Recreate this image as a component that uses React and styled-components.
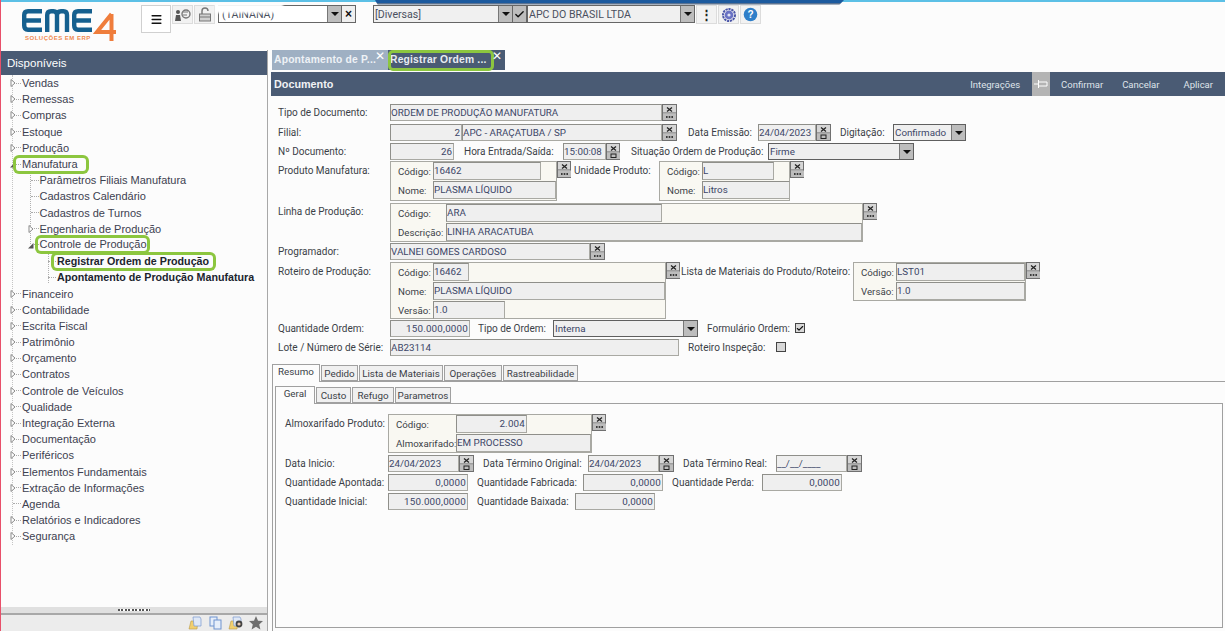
import React from "react";
import styled, { createGlobalStyle, css } from "styled-components";
import { Check, Menu } from "lucide-react";

const GREEN = "#8cc63f";
const SLATE = "#4a5b74";
const FORM_FONT = `Roboto, "Liberation Sans", Arial, sans-serif`;

const GlobalStyle = createGlobalStyle`
  html, body { margin: 0; padding: 0; height: 100%; overflow: hidden; background: #fcfcfc; }
  #root { height: 100%; }
  * { box-sizing: border-box; }
  body { font-family: "Liberation Sans", Arial, sans-serif; font-size: 11px; color: #333; }
`;

const Shell = styled.div`
  width: 1225px;
  height: 631px;
  display: flex;
  flex-direction: column;
  border-left: 1px solid #e8506a;
  overflow: hidden;
`;

const TopStrip = styled.div`
  height: 3px;
  flex: none;
  position: relative;
  z-index: 2;
  background: linear-gradient(180deg, #5cc0e6 0 2px, #fcfcfc 2px);
  &::after {
    content: "";
    position: absolute;
    left: 374px;
    top: 0;
    width: 469px;
    height: 5px;
    background: linear-gradient(180deg, #1c5a9e 0 3px, #5b7392 3px 4px, #a8b2bf 4px);
    clip-path: polygon(0 0, 100% 0, 99% 100%, 0.6% 100%);
  }
`;

const Header = styled.header`
  height: 47px;
  flex: none;
  display: flex;
  align-items: flex-start;
  padding-top: 2px;
  position: relative;
`;

const LogoBox = styled.div`
  width: 140px;
  flex: none;
  position: relative;
`;

const LogoTag = styled.span`
  position: absolute;
  left: 24px;
  top: 30px;
  font-size: 6px;
  font-weight: bold;
  letter-spacing: 0.5px;
  color: #ef8a50;
  white-space: nowrap;
`;

const MenuButton = styled.button`
  width: 30px;
  height: 28px;
  background: #fff;
  border: 1px solid #d0d0d0;
  padding: 0;
  display: flex;
  align-items: center;
  justify-content: center;
  color: #111;
`;

const ToolButton = styled.button`
  width: 21px;
  height: 19px;
  margin-left: ${(p) => p.$ml ?? 0}px;
  background: #f2f2f2;
  border: 1px solid #dcdcdc;
  padding: 0;
  display: flex;
  align-items: center;
  justify-content: center;
  color: #222;
  font-size: 13px;
  font-weight: bold;
`;

const Combo = styled.div`
  width: ${(p) => p.$w}px;
  height: ${(p) => p.$h ?? 18}px;
  margin-left: ${(p) => p.$ml ?? 0}px;
  flex: none;
  border: 1px solid #666;
  background: ${(p) => p.$bg ?? "#f0f0f0"};
  display: flex;
  align-items: center;
  overflow: hidden;
`;

const ComboText = styled.span`
  flex: 1;
  padding-left: ${(p) => p.$pl ?? 1}px;
  font-family: ${FORM_FONT};
  font-size: 10.6px;
  color: ${(p) => p.$c ?? "#4a4f5e"};
  white-space: nowrap;
  overflow: hidden;
`;

const DropButton = styled.span`
  width: 14px;
  height: 100%;
  flex: none;
  background: #bdbdbd;
  border-left: 1px solid #777;
  display: flex;
  align-items: center;
  justify-content: center;
  &::after {
    content: "";
    border-left: 4px solid transparent;
    border-right: 4px solid transparent;
    border-top: 4px solid #111;
  }
`;

const SquareButton = styled.span`
  width: 14px;
  height: 18px;
  flex: none;
  border: 1px solid #666;
  border-left: 0;
  background: ${(p) => p.$bg ?? "#efefef"};
  display: flex;
  align-items: center;
  justify-content: center;
  color: #111;
  font-size: 12px;
  font-weight: bold;
`;

const BlurPatch = styled.div`
  position: absolute;
  left: 214px;
  top: 1px;
  width: 68px;
  height: 9px;
  background: #fff;
  filter: blur(1px);
`;

const Body = styled.div`
  flex: 1;
  display: flex;
  min-height: 0;
`;

const Sidebar = styled.aside`
  width: 267px;
  flex: none;
  display: flex;
  flex-direction: column;
  border-right: 1px solid #a8a8a8;
`;

const SideTitle = styled.div`
  height: 24px;
  flex: none;
  margin-top: 1px;
  background: ${SLATE};
  color: #fff;
  font-size: 11.5px;
  padding: 6px 0 0 6px;
`;

const Tree = styled.ul`
  flex: 1;
  list-style: none;
  margin: 0;
  padding: 0;
  position: relative;
  &::before {
    content: "";
    position: absolute;
    left: 11px;
    top: 0;
    height: 470px;
    border-left: 1px dotted #c4c4c4;
  }
`;

const Guide = styled.i`
  position: absolute;
  left: ${(p) => p.$x}px;
  top: ${(p) => p.$y}px;
  height: ${(p) => p.$h}px;
  border-left: 1px dotted #b0b0b0;
`;

const TreeRow = styled.li`
  height: 16.2px;
  display: flex;
  align-items: center;
  position: relative;
  padding-left: ${(p) => 9 + p.$depth * 17.5}px;
  font-size: ${(p) => (p.$bold ? 10.7 : 11)}px;
  color: ${(p) => (p.$bold ? "#20242e" : "#3c4150")};
  font-weight: ${(p) => (p.$bold ? "bold" : "normal")};
  white-space: nowrap;
`;

const Twist = styled.span`
  width: 6px;
  height: 8px;
  flex: none;
  display: flex;
  align-items: center;
`;

const Dash = styled.span`
  width: ${(p) => p.$w ?? 6}px;
  flex: none;
  margin: 0 1px 0 ${(p) => p.$ml ?? 0}px;
  border-top: 1px dotted #aaa;
`;

const Mark = styled.span`
  ${(p) =>
    p.$on &&
    css`
      position: relative;
      z-index: 1;
      border-radius: 3px;
      padding: 0 ${p.$px ?? 5}px 0 ${p.$pl ?? 3}px;
      margin: 0 -${p.$px ?? 5}px 0 -${p.$pl ?? 3}px;
      box-shadow: 0 0 0 3px ${GREEN};
      line-height: 13px;
    `}
`;

const Splitter = styled.div`
  height: 6px;
  flex: none;
  background: #e0e0e0;
  display: flex;
  justify-content: center;
  align-items: center;
  &::after {
    content: "";
    width: 32px;
    height: 2px;
    background: repeating-linear-gradient(90deg, #555 0 2px, #fff 2px 3.5px);
  }
`;

const SideFoot = styled.div`
  height: 18px;
  flex: none;
  background: #ececec;
  border-top: 2px solid #a8a8a8;
  display: flex;
  justify-content: flex-end;
  align-items: center;
  gap: 6px;
  padding-right: 4px;
`;

const Main = styled.main`
  flex: 1;
  min-width: 0;
  display: flex;
  flex-direction: column;
  padding-left: 3px;
`;

const DocTabs = styled.div`
  height: 22px;
  flex: none;
  display: flex;
  padding-left: 1px;
`;

const DocTab = styled.div`
  width: ${(p) => p.$w}px;
  height: 20px;
  flex: none;
  background: ${(p) => (p.$on ? SLATE : "#9fb0c3")};
  color: ${(p) => (p.$on ? "#e8ecf2" : "#eef2f6")};
  font-size: 10.3px;
  font-weight: bold;
  letter-spacing: 0.2px;
  padding: 4px 0 0 2px;
  position: relative;
  white-space: nowrap;
`;

const DocTabRing = styled.span`
  position: absolute;
  left: 0;
  top: 0;
  width: 106px;
  height: 21px;
  border: 3px solid ${GREEN};
  border-radius: 5px;
`;

const TabClose = styled.span`
  position: absolute;
  right: 3px;
  top: 0;
  width: 10px;
  color: #fff;
  font-size: 12px;
  font-weight: normal;
  letter-spacing: 0;
  line-height: 12px;
  text-align: center;
`;

const DocBar = styled.div`
  height: 24px;
  flex: none;
  background: ${SLATE};
  display: flex;
  align-items: center;
  color: #fff;
  padding-left: 3px;
`;

const DocTitle = styled.strong`
  flex: 1;
  font-size: 10.8px;
  color: #f0f2f5;
`;

const BarAction = styled.span`
  font-family: ${FORM_FONT};
  font-size: 9.5px;
  color: #dfe4ea;
  margin-right: ${(p) => p.$mr}px;
`;

const PinButton = styled.span`
  width: 18px;
  height: 24px;
  background: #b4b4b4;
  display: flex;
  align-items: center;
  justify-content: center;
  margin-right: 11px;
`;

const Form = styled.section`
  flex: none;
  padding: 8px 0 0 7px;
  display: flex;
  flex-direction: column;
`;

const Row = styled.div`
  display: flex;
  align-items: flex-start;
  height: ${(p) => p.$h ?? 17}px;
  margin-top: ${(p) => p.$mt ?? 0}px;
`;

const Label = styled.label`
  width: ${(p) => p.$w}px;
  flex: none;
  font-family: ${FORM_FONT};
  font-size: 10px;
  line-height: 17px;
  color: #3b3f47;
  white-space: nowrap;
  margin-top: ${(p) => p.$mt ?? 0}px;
  margin-left: ${(p) => p.$ml ?? 0}px;
`;

const Input = styled.div`
  width: ${(p) => p.$w}px;
  height: ${(p) => p.$h ?? 17}px;
  flex: none;
  background: #efefef;
  border: 1px solid #a9a9a3;
  border-top-color: #8f8f8a;
  border-left-color: #8f8f8a;
  font-family: ${FORM_FONT};
  font-size: 9.8px;
  line-height: 15px;
  color: #3c4668;
  padding: 0 1px 0 0;
  text-align: ${(p) => (p.$right ? "right" : "left")};
  white-space: nowrap;
  overflow: hidden;
  letter-spacing: ${(p) => (p.$num ? "0.2px" : "0")};
`;

const Select = styled.div`
  width: ${(p) => p.$w}px;
  height: 17px;
  flex: none;
  background: #efefef;
  border: 1px solid #5f5f5f;
  display: flex;
  font-family: ${FORM_FONT};
  font-size: 9.8px;
  line-height: 15px;
  color: #3c4668;
`;

const SelectText = styled.span`
  flex: 1;
  padding-left: 1px;
`;

const Panel = styled.div`
  width: ${(p) => p.$w}px;
  height: ${(p) => p.$h}px;
  flex: none;
  background: #f9f8f2;
  border: 1px solid #a9a9a3;
  display: flex;
  flex-direction: column;
  gap: 1px;
  padding-left: 7px;
`;

const PanelRow = styled.div`
  display: flex;
  height: 18px;
`;

const PanelLabel = styled.span`
  width: ${(p) => p.$w}px;
  flex: none;
  font-family: ${FORM_FONT};
  font-size: 9.7px;
  line-height: 19px;
  color: #3b3f47;
`;

const Lookup = styled.span`
  width: ${(p) => p.$w ?? 15}px;
  height: 17px;
  flex: none;
  display: block;
  background: #d6d6d6;
  border: 1px solid #707070;
  margin-left: ${(p) => p.$ml ?? 0}px;
`;

const CheckBox = styled.span`
  width: 10px;
  height: 10px;
  margin: 3px 0 0 ${(p) => p.$ml ?? 0}px;
  flex: none;
  background: #d8d8d8;
  border: 1px solid #444;
  display: flex;
  align-items: center;
  justify-content: center;
`;

const TabStrip = styled.div`
  display: flex;
  align-items: flex-end;
  height: ${(p) => p.$h}px;
  margin-top: ${(p) => p.$mt ?? 0}px;
`;

const Tab = styled.div`
  width: ${(p) => p.$w}px;
  height: ${(p) => (p.$on ? p.$full : p.$full - 2)}px;
  flex: none;
  background: ${(p) => (p.$on ? "#fcfcfc" : "#f0f0f0")};
  border: 1px solid #a0a0a0;
  border-bottom: ${(p) => (p.$on ? "0" : "1px solid #a0a0a0")};
  margin-right: 1px;
  font-family: ${FORM_FONT};
  font-size: 9.8px;
  line-height: ${(p) => (p.$on ? 14 : 15)}px;
  text-align: center;
  white-space: nowrap;
  color: #3b3f47;
  position: relative;
  z-index: ${(p) => (p.$on ? 1 : 0)};
  margin-bottom: ${(p) => (p.$on ? -1 : 0)}px;
`;

const TabPane = styled.div`
  flex: 1;
  min-height: 0;
  display: flex;
  flex-direction: column;
  border-top: 1px solid #a0a0a0;
  border-left: 1px solid #a0a0a0;
  padding: 3px 2px 3px 2px;
`;

const InnerPane = styled.div`
  flex: 1;
  min-height: 0;
  border: 1px solid #a0a0a0;
  padding: 10px 0 0 9px;
  display: flex;
  flex-direction: column;
`;

const TabArea = styled.div`
  flex: 1;
  min-height: 0;
  display: flex;
  flex-direction: column;
  margin-left: 1px;
`;

const LookupGlyph = ({ date }) => (
  <svg width="13" height="15" viewBox="0 0 13 15" style={{ display: "block" }}>
    <path d="M4 2.5l5 4M9 2.5l-5 4" stroke="#222" strokeWidth="1.3" />
    <path d="M0 8h13" stroke="#666" />
    <rect x="0" y="8.5" width="13" height="6.5" fill="#bdbdbd" />
    {date ? (
      <rect x="4" y="10" width="5" height="3.5" fill="none" stroke="#222" />
    ) : (
      <path d="M3 12h1.6M5.7 12h1.6M8.4 12h1.6" stroke="#111" strokeWidth="1.4" />
    )}
  </svg>
);

const LookupBtn = ({ w, ml, date }) => (
  <Lookup $w={w} $ml={ml}>
    <LookupGlyph date={date} />
  </Lookup>
);

const ChevronRight = () => (
  <svg width="6" height="8" viewBox="0 0 6 8">
    <path d="M1 .5l4 3.5-4 3.5z" fill="#fff" stroke="#8a8a8a" />
  </svg>
);

const ChevronOpen = () => (
  <svg width="6" height="8" viewBox="0 0 6 8">
    <path d="M5.5 2v5.5H0z" fill="#555" />
  </svg>
);

const TREE = [
  { t: "Vendas", arrow: true },
  { t: "Remessas", arrow: true },
  { t: "Compras", arrow: true },
  { t: "Estoque", arrow: true },
  { t: "Produção", arrow: true },
  { t: "Manufatura", open: true, mark: { px: 8, pl: 6 } },
  { t: "Parâmetros Filiais Manufatura", d: 1, leaf: true },
  { t: "Cadastros Calendário", d: 1, leaf: true },
  { t: "Cadastros de Turnos", d: 1, leaf: true },
  { t: "Engenharia de Produção", d: 1, arrow: true },
  { t: "Controle de Produção", d: 1, open: true, mark: { px: 0, pl: 2 } },
  { t: "Registrar Ordem de Produção", d: 2, leaf: true, bold: true, mark: { px: 4, pl: 3 } },
  { t: "Apontamento de Produção Manufatura", d: 2, leaf: true, bold: true },
  { t: "Financeiro", arrow: true },
  { t: "Contabilidade", arrow: true },
  { t: "Escrita Fiscal", arrow: true },
  { t: "Patrimônio", arrow: true },
  { t: "Orçamento", arrow: true },
  { t: "Contratos", arrow: true },
  { t: "Controle de Veículos", arrow: true },
  { t: "Qualidade", arrow: true },
  { t: "Integração Externa", arrow: true },
  { t: "Documentação", arrow: true },
  { t: "Periféricos", arrow: true },
  { t: "Elementos Fundamentais", arrow: true },
  { t: "Extração de Informações", arrow: true },
  { t: "Agenda", leaf: true },
  { t: "Relatórios e Indicadores", arrow: true },
  { t: "Segurança", arrow: true },
];

const Logo = () => (
  <svg width="96" height="38" viewBox="0 0 96 38" style={{ display: "block", marginLeft: 20 }}>
    <g fill="none" stroke="#15608f" strokeWidth="4.4">
      <path d="M21 6.200H7Q3.200 6.200 3.200 10V20.500Q3.200 24.800 7 24.800H21M3.500 15.500H20" />
      <path d="M26.200 27V10Q26.200 6.200 30 6.200H32.500Q36 6.200 36 10V27M36 10Q36 6.200 40 6.200H42.500Q46 6.200 46 10V27" />
      <path d="M71 6.200H57Q53.200 6.200 53.200 10V20.500Q53.200 24.800 57 24.800H71M53.500 15.500H70" />
    </g>
    <path d="M90.500 9V36M90.500 9L76 27H95" fill="none" stroke="#ef7d3c" strokeWidth="4" />
  </svg>
);

const Pin = () => (
  <svg width="14" height="8" viewBox="0 0 14 8">
    <path d="M4.500 0v8M0 4h4.500M4.500 2h8.500v4H4.500" fill="none" stroke="#fff" />
  </svg>
);

const FolderDoc = ({ person }) => (
  <svg width="15" height="14" viewBox="0 0 15 14">
    <path d="M1 13L3 5h3l1-1h3l-1 9z" fill="#f2cf6d" stroke="#b89a4a" strokeWidth=".6" />
    <path d="M5 1h7l1 2v7H6z" fill="#dfe8f6" stroke="#7a9ad0" strokeWidth=".7" />
    {person && <circle cx="11" cy="8" r="3.4" fill="#444" />}
    {person && <circle cx="11" cy="8" r="1.6" fill="#e9c8b0" />}
  </svg>
);

const CopyDocs = () => (
  <svg width="13" height="14" viewBox="0 0 13 14">
    <rect x="1" y="1" width="7" height="9" fill="#e6eefa" stroke="#6f93cf" />
    <rect x="5" y="4" width="7" height="9" fill="#e6eefa" stroke="#6f93cf" />
  </svg>
);

const Star = () => (
  <svg width="14" height="14" viewBox="0 0 14 14">
    <path d="M7 0l2 4.700 5 .4-3.800 3.300 1.200 5L7 10.700 2.600 13.400l1.200-5L0 5.100l5-.4z" fill="#6f6f6f" />
  </svg>
);

const Gear = () => (
  <svg width="14" height="14" viewBox="0 0 14 14">
    <circle cx="7" cy="7" r="6" fill="none" stroke="#4a55a8" strokeWidth="2" strokeDasharray="2.200 .8" />
    <circle cx="7" cy="7" r="4.400" fill="#6a72c4" />
    <circle cx="7" cy="7" r="1.600" fill="#dfe3f5" />
  </svg>
);

const Help = () => (
  <svg width="15" height="15" viewBox="0 0 15 15">
    <circle cx="7.500" cy="7.500" r="6.800" fill="#2f7fc9" />
    <text x="7.500" y="11.200" textAnchor="middle" fontSize="10" fontWeight="bold" fill="#fff" fontFamily="Liberation Sans">?</text>
  </svg>
);

const Person = () => (
  <svg width="17" height="15" viewBox="0 0 17 15">
    <circle cx="4" cy="5" r="2" fill="#555" />
    <path d="M1 14l1-6h4l1 6z" fill="#555" />
    <circle cx="12" cy="7" r="4" fill="none" stroke="#777" strokeWidth="1.400" />
    <path d="M9 5h5M9 8h4" stroke="#777" />
  </svg>
);

const Lock = () => (
  <svg width="14" height="15" viewBox="0 0 14 15">
    <path d="M4 7V4a3 3 0 0 1 6 0" fill="none" stroke="#777" strokeWidth="1.400" />
    <rect x="1.500" y="7" width="11" height="7" fill="#d0d0d0" stroke="#777" />
    <path d="M1.500 10h11" stroke="#777" />
  </svg>
);

const App = () => (
  <>
    <GlobalStyle />
    <Shell>
      <TopStrip />
      <Header>
        <LogoBox>
          <Logo />
          <LogoTag>SOLUÇÕES EM ERP</LogoTag>
        </LogoBox>
        <MenuButton aria-label="menu">
          <Menu size={13} strokeWidth={2.8} />
        </MenuButton>
        <ToolButton $ml={1}>
          <Person />
        </ToolButton>
        <ToolButton $ml={1}>
          <Lock />
        </ToolButton>
        <Combo $w={124} $ml={3} $bg="#fff">
          <ComboText $pl={3}>(TAINANA)</ComboText>
          <DropButton />
        </Combo>
        <SquareButton>×</SquareButton>
        <BlurPatch />
        <Combo $w={140} $ml={17}>
          <ComboText>[Diversas]</ComboText>
          <DropButton />
        </Combo>
        <SquareButton $bg="#bdbdbd">
          <Check size={11} strokeWidth={3} />
        </SquareButton>
        <Combo $w={168}>
          <ComboText>APC DO BRASIL LTDA</ComboText>
          <DropButton />
        </Combo>
        <ToolButton $ml={1}>⋮</ToolButton>
        <ToolButton $ml={1}>
          <Gear />
        </ToolButton>
        <ToolButton $ml={1}>
          <Help />
        </ToolButton>
      </Header>
      <Body>
        <Sidebar>
          <SideTitle>Disponíveis</SideTitle>
          <Tree>
            <Guide $x={29} $y={97} $h={72} />
            <Guide $x={47} $y={178} $h={30} />
            {TREE.map((item) => {
              const d = item.d ?? 0;
              return (
                <TreeRow key={item.t} $depth={d} $bold={item.bold}>
                  {item.leaf ? (
                    <Dash $w={8} $ml={3} />
                  ) : (
                    <>
                      <Twist>{item.open ? <ChevronOpen /> : <ChevronRight />}</Twist>
                      <Dash $w={5} />
                    </>
                  )}
                  <Mark $on={!!item.mark} $px={item.mark?.px} $pl={item.mark?.pl}>
                    {item.t}
                  </Mark>
                </TreeRow>
              );
            })}
          </Tree>
          <Splitter />
          <SideFoot>
            <FolderDoc />
            <CopyDocs />
            <FolderDoc person />
            <Star />
          </SideFoot>
        </Sidebar>
        <Main>
          <DocTabs>
            <DocTab $w={116}>
              Apontamento de P...
              <TabClose>✕</TabClose>
            </DocTab>
            <DocTab $w={117} $on>
              Registrar Ordem ...
              <DocTabRing />
              <TabClose>✕</TabClose>
            </DocTab>
          </DocTabs>
          <DocBar>
            <DocTitle>Documento</DocTitle>
            <BarAction $mr={12}>Integrações</BarAction>
            <PinButton>
              <Pin />
            </PinButton>
            <BarAction $mr={19}>Confirmar</BarAction>
            <BarAction $mr={24}>Cancelar</BarAction>
            <BarAction $mr={12}>Aplicar</BarAction>
          </DocBar>
          <Form>
            <Row>
              <Label $w={112}>Tipo de Documento:</Label>
              <Input $w={272}>ORDEM DE PRODUÇÃO MANUFATURA</Input>
              <LookupBtn />
            </Row>
            <Row $mt={3}>
              <Label $w={112}>Filial:</Label>
              <Input $w={72} $right>2</Input>
              <Input $w={200}>APC - ARAÇATUBA / SP</Input>
              <LookupBtn />
              <Label $w={70} $ml={11}>Data Emissão:</Label>
              <Input $w={58}>24/04/2023</Input>
              <LookupBtn date />
              <Label $w={53} $ml={9}>Digitação:</Label>
              <Select $w={73}>
                <SelectText>Confirmado</SelectText>
                <DropButton />
              </Select>
            </Row>
            <Row $mt={2}>
              <Label $w={112}>Nº Documento:</Label>
              <Input $w={64} $right>26</Input>
              <Label $w={99} $ml={10}>Hora Entrada/Saída:</Label>
              <Input $w={43}>15:00:08</Input>
              <LookupBtn w={14} date />
              <Label $w={137} $ml={11}>Situação Ordem de Produção:</Label>
              <Select $w={146}>
                <SelectText>Firme</SelectText>
                <DropButton />
              </Select>
            </Row>
            <Row $h={40} $mt={1}>
              <Label $w={112} $mt={1}>Produto Manufatura:</Label>
              <Panel $w={167} $h={40}>
                <PanelRow>
                  <PanelLabel $w={35}>Código:</PanelLabel>
                  <Input $w={108} $h={18}>16462</Input>
                </PanelRow>
                <PanelRow>
                  <PanelLabel $w={35}>Nome:</PanelLabel>
                  <Input $w={123} $h={18}>PLASMA LÍQUIDO</Input>
                </PanelRow>
              </Panel>
              <LookupBtn w={14} />
              <Label $w={85} $ml={3} $mt={1}>Unidade Produto:</Label>
              <Panel $w={131} $h={40}>
                <PanelRow>
                  <PanelLabel $w={35}>Código:</PanelLabel>
                  <Input $w={72} $h={18}>L</Input>
                </PanelRow>
                <PanelRow>
                  <PanelLabel $w={35}>Nome:</PanelLabel>
                  <Input $w={88} $h={18}>Litros</Input>
                </PanelRow>
              </Panel>
              <LookupBtn w={14} />
            </Row>
            <Row $h={39} $mt={2}>
              <Label $w={112}>Linha de Produção:</Label>
              <Panel $w={473} $h={39}>
                <PanelRow>
                  <PanelLabel $w={48}>Código:</PanelLabel>
                  <Input $w={216} $h={18}>ARA</Input>
                </PanelRow>
                <PanelRow>
                  <PanelLabel $w={48}>Descrição:</PanelLabel>
                  <Input $w={416} $h={18}>LINHA ARACATUBA</Input>
                </PanelRow>
              </Panel>
              <LookupBtn w={14} />
            </Row>
            <Row $mt={1}>
              <Label $w={112}>Programador:</Label>
              <Input $w={200}>VALNEI GOMES CARDOSO</Input>
              <LookupBtn />
            </Row>
            <Row $h={57} $mt={2}>
              <Label $w={112} $mt={1}>Roteiro de Produção:</Label>
              <Panel $w={276} $h={57}>
                <PanelRow>
                  <PanelLabel $w={35}>Código:</PanelLabel>
                  <Input $w={36} $h={18}>16462</Input>
                </PanelRow>
                <PanelRow>
                  <PanelLabel $w={35}>Nome:</PanelLabel>
                  <Input $w={232} $h={18}>PLASMA LÍQUIDO</Input>
                </PanelRow>
                <PanelRow>
                  <PanelLabel $w={35}>Versão:</PanelLabel>
                  <Input $w={72} $h={18}>1.0</Input>
                </PanelRow>
              </Panel>
              <LookupBtn w={14} />
              <Label $w={172} $ml={1} $mt={1}>Lista de Materiais do Produto/Roteiro:</Label>
              <Panel $w={173} $h={39}>
                <PanelRow>
                  <PanelLabel $w={35}>Código:</PanelLabel>
                  <Input $w={129} $h={18}>LST01</Input>
                </PanelRow>
                <PanelRow>
                  <PanelLabel $w={35}>Versão:</PanelLabel>
                  <Input $w={129} $h={18}>1.0</Input>
                </PanelRow>
              </Panel>
              <LookupBtn w={14} />
            </Row>
            <Row $mt={1}>
              <Label $w={112}>Quantidade Ordem:</Label>
              <Input $w={80} $right $num>150.000,0000</Input>
              <Label $w={75} $ml={8}>Tipo de Ordem:</Label>
              <Select $w={145}>
                <SelectText>Interna</SelectText>
                <DropButton />
              </Select>
              <Label $w={88} $ml={9}>Formulário Ordem:</Label>
              <CheckBox>
                <Check size={9} strokeWidth={3.5} color="#111" />
              </CheckBox>
            </Row>
            <Row $mt={2}>
              <Label $w={112}>Lote /  Número de Série:</Label>
              <Input $w={289}>AB23114</Input>
              <Label $w={88} $ml={9}>Roteiro Inspeção:</Label>
              <CheckBox />
            </Row>
          </Form>
          <TabArea>
            <TabStrip $h={18} $mt={7}>
              <Tab $w={48} $full={18} $on>Resumo</Tab>
              <Tab $w={37} $full={18}>Pedido</Tab>
              <Tab $w={84} $full={18}>Lista de Materiais</Tab>
              <Tab $w={58} $full={18}>Operações</Tab>
              <Tab $w={75} $full={18}>Rastreabilidade</Tab>
            </TabStrip>
            <TabPane>
              <TabStrip $h={18}>
                <Tab $w={40} $full={18} $on>Geral</Tab>
                <Tab $w={35} $full={18}>Custo</Tab>
                <Tab $w={42} $full={18}>Refugo</Tab>
                <Tab $w={56} $full={18}>Parametros</Tab>
              </TabStrip>
              <InnerPane>
                <Row $h={39}>
                  <Label $w={103} $mt={1}>Almoxarifado Produto:</Label>
                  <Panel $w={204} $h={39}>
                    <PanelRow>
                      <PanelLabel $w={60}>Código:</PanelLabel>
                      <Input $w={71} $h={18} $right $num>2.004</Input>
                    </PanelRow>
                    <PanelRow>
                      <PanelLabel $w={60}>Almoxarifado:</PanelLabel>
                      <Input $w={135} $h={18}>EM PROCESSO</Input>
                    </PanelRow>
                  </Panel>
                  <LookupBtn w={14} />
                </Row>
                <Row $mt={2}>
                  <Label $w={103}>Data Inicio:</Label>
                  <Input $w={71}>24/04/2023</Input>
                  <LookupBtn date />
                  <Label $w={105} $ml={9}>Data Término Original:</Label>
                  <Input $w={71}>24/04/2023</Input>
                  <LookupBtn date />
                  <Label $w={93} $ml={9}>Data Término Real:</Label>
                  <Input $w={71}>__/__/____</Input>
                  <LookupBtn date />
                </Row>
                <Row $mt={2}>
                  <Label $w={103}>Quantidade Apontada:</Label>
                  <Input $w={80} $right $num>0,0000</Input>
                  <Label $w={106} $ml={9}>Quantidade Fabricada:</Label>
                  <Input $w={80} $right $num>0,0000</Input>
                  <Label $w={90} $ml={9}>Quantidade Perda:</Label>
                  <Input $w={80} $right $num>0,0000</Input>
                </Row>
                <Row $mt={2}>
                  <Label $w={103}>Quantidade Inicial:</Label>
                  <Input $w={80} $right $num>150.000,0000</Input>
                  <Label $w={98} $ml={9}>Quantidade Baixada:</Label>
                  <Input $w={80} $right $num>0,0000</Input>
                </Row>
              </InnerPane>
            </TabPane>
          </TabArea>
        </Main>
      </Body>
    </Shell>
  </>
);

export default App;
